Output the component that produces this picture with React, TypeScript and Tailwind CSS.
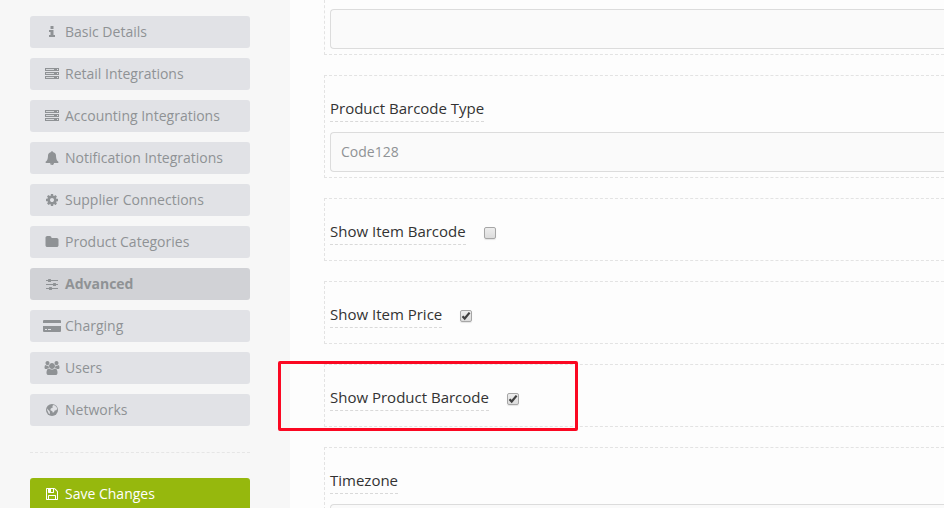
import { ReactNode, useState } from 'react';

type IconName =
  | 'info'
  | 'server'
  | 'bell'
  | 'cog'
  | 'folder'
  | 'sliders'
  | 'card'
  | 'users'
  | 'globe'
  | 'save';

interface NavItem {
  label: string;
  icon: IconName;
}

const NAV_ITEMS: NavItem[] = [
  { label: 'Basic Details', icon: 'info' },
  { label: 'Retail Integrations', icon: 'server' },
  { label: 'Accounting Integrations', icon: 'server' },
  { label: 'Notification Integrations', icon: 'bell' },
  { label: 'Supplier Connections', icon: 'cog' },
  { label: 'Product Categories', icon: 'folder' },
  { label: 'Advanced', icon: 'sliders' },
  { label: 'Charging', icon: 'card' },
  { label: 'Users', icon: 'users' },
  { label: 'Networks', icon: 'globe' },
];

function Icon({ name }: { name: IconName }) {
  switch (name) {
    case 'info':
      return (
        <svg viewBox="0 0 14 14" className="size-3.5" fill="currentColor">
          <path d="M5.500 1h3v3h-3zM4 5h4.500v5H10v2H4v-2h1.500V7H4z" />
        </svg>
      );
    case 'server':
      return (
        <svg viewBox="0 0 14 14" className="size-3.5" fill="currentColor">
          <path
            fillRule="evenodd"
            d="M0 1h14v3H0zM1 2v1h8V2zM12 2v1h1V2zM0 5h14v3H0zM1 6v1h8V6zM12 6v1h1V6zM0 9h14v3H0zM1 10v1h8v-1zM12 10v1h1v-1z"
          />
          <path d="M1 2h8v1H1zM1 6h8v1H1zM1 10h8v1H1z" fillOpacity="0.15" />
        </svg>
      );
    case 'bell':
      return (
        <svg viewBox="0 0 1792 1792" className="size-3.5" fill="currentColor">
          <path d="M912 1696q0-16-16-16-59 0-101.5-42.5t-42.5-101.5q0-16-16-16t-16 16q0 73 51.5 124.5t124.5 51.500q16 0 16-16zm816-288q0 52-38 90t-90 38h-448q0 106-75 181t-181 75-181-75-75-181h-448q-52 0-90-38t-38-90q50-42 91-88t85-119.500 74.500-158.500 50-206 19.500-260q0-152 117-282.500t307-158.500q-8-19-8-39 0-40 28-68t68-28 68 28 28 68q0 20-8 39 190 28 307 158.500t117 282.500q0 139 19.500 260t50 206 74.500 158.500 85 119.500 91 88z" />
        </svg>
      );
    case 'cog':
      return (
        <svg viewBox="0 0 1792 1792" className="size-3.5" fill="currentColor">
          <path d="M1152 896q0-106-75-181t-181-75-181 75-75 181 75 181 181 75 181-75 75-181zm512-109v222q0 12-8 23t-20 13l-185 28q-19 54-39 91 35 50 107 138 10 12 10 25t-9 23q-27 37-99 108t-94 71q-12 0-26-9l-138-108q-44 23-91 38-16 136-29 186-7 28-36 28h-222q-14 0-24.500-8.500t-11.500-21.500l-28-184q-49-16-90-37l-141 107q-10 9-25 9-14 0-25-11-126-114-165-168-7-10-7-23 0-12 8-23 15-21 51-66.500t54-70.500q-27-50-41-99l-183-27q-13-2-21-12.500t-8-23.500v-222q0-12 8-23t19-13l186-28q14-46 39-92-40-57-107-138-10-12-10-24 0-10 9-23 26-36 98.500-107.500t94.500-71.500q13 0 26 10l138 107q44-23 91-38 16-136 29-186 7-28 36-28h222q14 0 24.500 8.500t11.500 21.500l28 184q49 16 90 37l142-107q9-9 24-9 13 0 25 10 129 119 165 170 7 8 7 22 0 12-8 23-15 21-51 66.500t-54 70.500q26 50 41 98l183 28q13 2 21 12.500t8 23.500z" />
        </svg>
      );
    case 'folder':
      return (
        <svg viewBox="0 0 1792 1792" className="size-3.5" fill="currentColor">
          <path d="M1728 608v704q0 92-66 158t-158 66h-1216q-92 0-158-66t-66-158v-960q0-92 66-158t158-66h320q92 0 158 66t66 158v32h672q92 0 158 66t66 158z" />
        </svg>
      );
    case 'sliders':
      return (
        <svg viewBox="0 0 14 14" className="size-3.5" fill="currentColor">
          <path d="M1 3h12v1H1zM1 7h12v1H1zM1 11h12v1H1z" />
          <rect x="3" y="2" width="3" height="3" rx="0.5" />
          <rect x="8" y="6" width="3" height="3" rx="0.5" />
          <rect x="4" y="10" width="3" height="3" rx="0.5" />
        </svg>
      );
    case 'card':
      return (
        <svg viewBox="0 0 18 12" className="h-3 w-4.5" fill="currentColor">
          <path d="M1 0h16q1 0 1 1v2H0V1q0-1 1-1z" />
          <path
            fillRule="evenodd"
            d="M0 6h18v5q0 1-1 1H1q-1 0-1-1zM2 9v1h2V9zM5 9v1h3V9z"
          />
        </svg>
      );
    case 'users':
      return (
        <svg viewBox="0 0 1920 1792" className="h-3.5 w-4" fill="currentColor">
          <path d="M593 896q-162 5-265 128h-134q-82 0-138-40.500t-56-118.500q0-353 124-353 6 0 43.500 21t97.500 42.500 119 21.500q67 0 133-23-5 37-5 66 0 139 81 256zm1071 637q0 120-73 189.500t-194 69.500h-874q-121 0-194-69.500t-73-189.500q0-53 3.500-103.500t14-109 26.500-108.500 43-97.500 62-81 85.500-53.500 111.500-20q10 0 43 21.500t73 48 107 48 135 21.500 135-21.500 107-48 73-48 43-21.500q61 0 111.500 20t85.500 53.500 62 81 43 97.500 26.500 108.500 14 109 3.500 103.500zm-1024-1277q0 106-75 181t-181 75-181-75-75-181 75-181 181-75 181 75 75 181zm704 384q0 159-112.500 271.500t-271.500 112.500-271.500-112.500-112.500-271.500 112.500-271.500 271.500-112.500 271.500 112.500 112.500 271.500zm576 225q0 78-56 118.500t-138 40.500h-134q-103-123-265-128 81-117 81-256 0-29-5-66 66 23 133 23 59 0 119-21.500t97.500-42.500 43.500-21q124 0 124 353zm-128-609q0 106-75 181t-181 75-181-75-75-181 75-181 181-75 181 75 75 181z" />
        </svg>
      );
    case 'globe':
      return (
        <svg viewBox="0 0 14 14" className="size-3.5">
          <circle cx="7" cy="7" r="6" fill="currentColor" />
          <path
            className="fill-[#e1e2e6]"
            d="M8 2l2 .5 1.800 2 .4 1.500-1 1.300-1.500.2-.6 1.600-1.300.7-.6-1.800-1.500-.6-.3-1.300 1.500-1.300 1-.2-.5-1.200zM2.300 5.500l1 1.600 1.200 1 .4 1.300-.2 1.800-1-.8-.7-1.700-.8-1.400z"
          />
        </svg>
      );
    case 'save':
      return (
        <svg viewBox="0 0 1792 1792" className="size-3.5" fill="currentColor">
          <path d="M512 1536h768v-384h-768v384zm896 0h128v-896q0-14-10-38.500t-20-34.500l-281-281q-10-10-34-20t-39-10v416q0 40-28 68t-68 28h-576q-40 0-68-28t-28-68v-416h-128v1280h128v-416q0-40 28-68t68-28h832q40 0 68 28t28 68v416zm-384-928v-320q0-13-9.500-22.500t-22.500-9.500h-192q-13 0-22.500 9.500t-9.500 22.500v320q0 13 9.500 22.500t22.500 9.500h192q13 0 22.500-9.500t9.500-22.500zm640 32v928q0 40-28 68t-68 28h-1344q-40 0-68-28t-28-68v-1344q0-40 28-68t68-28h928q40 0 88 20t76 48l280 280q28 28 48 76t20 88z" />
        </svg>
      );
  }
}

function ButtonContent({ icon, label }: NavItem) {
  return (
    <>
      <span className="flex w-5 justify-center">
        <Icon name={icon} />
      </span>
      <span>{label}</span>
    </>
  );
}

function Sidebar() {
  const [active, setActive] = useState('Advanced');

  return (
    <aside className="w-[290px] shrink-0 bg-[#f7f7f7] pt-4 pr-10 pl-[30px]">
      <nav className="flex flex-col gap-2.5">
        {NAV_ITEMS.map((item) => (
          <button
            key={item.label}
            onClick={() => setActive(item.label)}
            className={
              'flex h-8 items-center gap-[3px] rounded-[3px] px-3 text-sm text-[#8f9295] ' +
              (item.label === active ? 'bg-[#d1d2d6] font-bold' : 'bg-[#e1e2e6]')
            }
          >
            <ButtonContent {...item} />
          </button>
        ))}
      </nav>
      <hr className="my-[25px] mt-[26px] border-t border-dashed border-[#e6e6e6]" />
      <button className="flex h-8 w-full items-center gap-[3px] rounded-[3px] bg-[#96b80d] px-3 text-sm text-white">
        <ButtonContent icon="save" label="Save Changes" />
      </button>
    </aside>
  );
}

const CONTROL =
  'block h-10 w-full appearance-none rounded-l border border-r-0 border-[#dcdcdc] bg-[#fafafa] px-2.5 text-sm text-[#8f9295] outline-none';

function FieldLabel({ id, children }: { id: string; children: ReactNode }) {
  return (
    <label
      htmlFor={id}
      className="inline-block border-b border-dashed border-[#d9d9d9] pb-px align-top text-[15px] leading-6 text-[#333]"
    >
      {children}
    </label>
  );
}

function SelectField({
  id,
  label,
  options,
}: {
  id: string;
  label: string;
  options: string[];
}) {
  return (
    <div className="border border-r-0 border-dashed border-[#e3e3e3] pt-5 pb-[5px] pl-[5px]">
      <div className="mb-2.5 flex">
        <FieldLabel id={id}>{label}</FieldLabel>
      </div>
      <select id={id} className={CONTROL}>
        {options.map((o) => (
          <option key={o}>{o}</option>
        ))}
      </select>
    </div>
  );
}

function CheckField({
  id,
  label,
  initial = false,
  highlighted = false,
}: {
  id: string;
  label: string;
  initial?: boolean;
  highlighted?: boolean;
}) {
  const [checked, setChecked] = useState(initial);

  return (
    <div className="relative flex items-center gap-[18px] border border-r-0 border-dashed border-[#e3e3e3] pt-5 pb-[15px] pl-[5px]">
      <FieldLabel id={id}>{label}</FieldLabel>
      <span className="grid pt-0.5">
        <input
          id={id}
          type="checkbox"
          checked={checked}
          onChange={(e) => setChecked(e.target.checked)}
          className="col-start-1 row-start-1 size-3 appearance-none rounded-xs border border-[#a6a6a6] bg-linear-to-b from-[#ededed] to-[#dcdcdc] shadow-[0_1px_1px_#e4e4e4]"
        />
        {checked && (
          <svg
            viewBox="0 0 12 12"
            className="pointer-events-none col-start-1 row-start-1 size-3"
            fill="none"
            stroke="#404040"
            strokeWidth="2.2"
          >
            <path d="M2.500 6.200l2.200 2.300L9.600 2.600" />
          </svg>
        )}
      </span>
      {highlighted && (
        <div className="pointer-events-none absolute -top-1 -left-[47px] h-[70px] w-[300px] rounded-xs border-3 border-[#fb0822]" />
      )}
    </div>
  );
}

export default function App() {
  return (
    <div className="flex h-screen overflow-hidden bg-[#fdfdfd] font-['Open_Sans','Noto_Sans',sans-serif]">
      <Sidebar />
      <main className="flex min-w-0 flex-1 flex-col gap-5 pl-[34px]">
        <div className="border border-t-0 border-r-0 border-dashed border-[#e3e3e3] pt-[9px] pb-[5px] pl-[5px]">
          <input type="text" aria-label="Product label" className={CONTROL} />
        </div>
        <SelectField
          id="barcode-type"
          label="Product Barcode Type"
          options={['Code128']}
        />
        <CheckField id="item-barcode" label="Show Item Barcode" />
        <CheckField id="item-price" label="Show Item Price" initial />
        <CheckField
          id="product-barcode"
          label="Show Product Barcode"
          initial
          highlighted
        />
        <SelectField id="timezone" label="Timezone" options={['']} />
      </main>
    </div>
  );
}
